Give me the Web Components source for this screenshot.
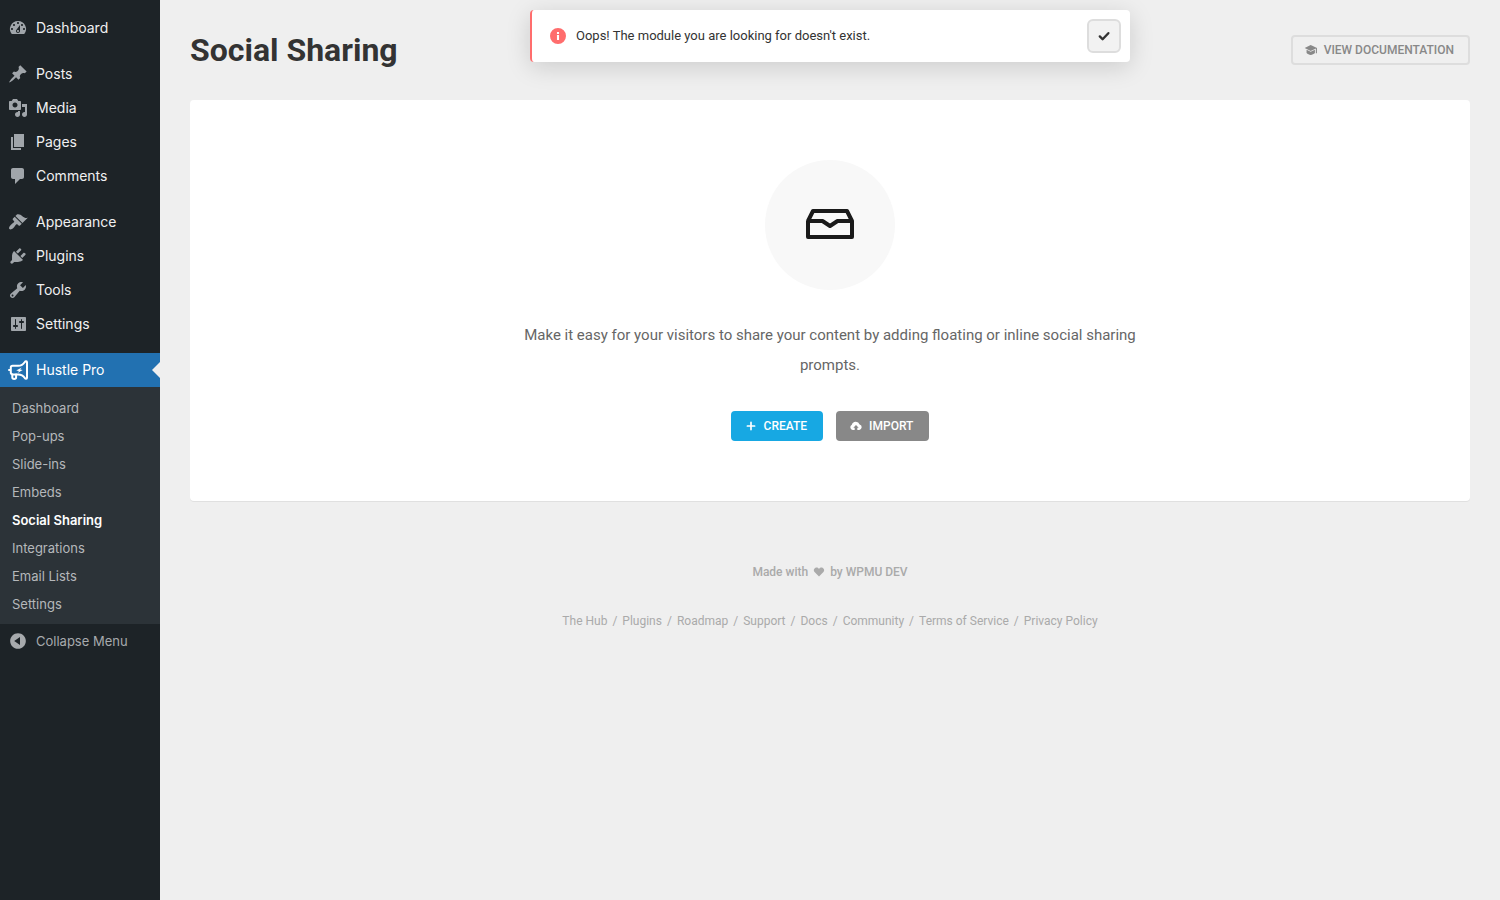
<!doctype html>
<html lang="en">
<head>
    <meta charset="UTF-8">
    <title>Social Sharing</title>
    <style>
        body {
            margin: 0;
            background: #efefef;
            font-family: Roboto, "Liberation Sans", sans-serif;
        }
    </style>
</head>
<body>
<admin-page></admin-page>

<script type="text/javascript">

    // all icons use currentColor, so they follow the text colour of their user
    const icons = {
        dashboard: '<path fill-rule="evenodd" d="M3.76 16h12.48A7.998 7.998 0 0 0 10 3a7.998 7.998 0 0 0-6.24 13zM10 4c.55 0 1 .45 1 1s-.45 1-1 1-1-.45-1-1 .45-1 1-1zM6 6c.55 0 1 .45 1 1s-.45 1-1 1-1-.45-1-1 .45-1 1-1zm8 0c.55 0 1 .45 1 1s-.45 1-1 1-1-.45-1-1 .45-1 1-1zm-5.37 5.55L12 7v6c0 1.1-.9 2-2 2s-2-.9-2-2c0-.57.24-1.08.63-1.45zM4 10c.55 0 1 .45 1 1s-.45 1-1 1-1-.45-1-1 .45-1 1-1zm12 0c.55 0 1 .45 1 1s-.45 1-1 1-1-.45-1-1 .45-1 1-1zm-5 3c0-.55-.45-1-1-1s-1 .45-1 1 .45 1 1 1 1-.45 1-1z"/>',
        post: '<path d="M10.44 3.02l1.82-1.82 6.36 6.35-1.83 1.82c-1.05-.68-2.48-.57-3.41.36l-.75.75c-.92.93-1.04 2.35-.35 3.41l-1.83 1.82-2.41-2.41-2.8 2.79c-.42.42-3.38 2.71-3.8 2.29s1.86-3.39 2.28-3.81l2.79-2.79L4.1 9.36l1.83-1.82c1.05.69 2.48.57 3.4-.36l.75-.75c.93-.92 1.05-2.35.36-3.41z"/>',
        media: '<path fill-rule="evenodd" d="M13 11V4c0-.55-.45-1-1-1h-1.67L9 1H5L3.67 3H2c-.55 0-1 .45-1 1v7c0 .55.45 1 1 1h10c.55 0 1-.45 1-1zM7 4.5c1.38 0 2.5 1.12 2.5 2.5S8.38 9.5 7 9.5 4.5 8.38 4.5 7 5.62 4.5 7 4.5zM14 6h5v10.5c0 1.38-1.12 2.5-2.5 2.5S14 17.88 14 16.5s1.12-2.5 2.5-2.5c.17 0 .34.02.5.05V9h-3V6zm-4 8.05V13h2v3.5c0 1.38-1.12 2.5-2.5 2.5S7 17.88 7 16.5 8.12 14 9.5 14c.17 0 .34.02.5.05z"/>',
        page: '<path d="M6 15V2h10v13H6zm-1 1h8v2H3V5h2v11z"/>',
        comment: '<path d="M5 2h9c1.1 0 2 .9 2 2v7c0 1.1-.9 2-2 2h-2l-5 5v-5H5c-1.1 0-2-.9-2-2V4c0-1.1.9-2 2-2z"/>',
        appearance: '<path d="M14.48 11.06L7.41 3.99l1.5-1.5c.5-.56 2.3-.47 3.51.32 1.21.8 1.43 1.28 2.91 2.1 1.18.64 2.45 1.26 4.45.85zm-.71.71L6.7 4.7 4.93 6.47c-.39.39-.39 1.02 0 1.41l1.06 1.06c.39.39.39 1.03 0 1.42-.6.6-1.43 1.11-2.21 1.69-.35.26-.7.53-1.01.84C1.43 14.23.4 16.08 1.4 17.07c.99 1 2.84-.03 4.18-1.36.31-.31.58-.66.85-1.02.57-.78 1.08-1.61 1.69-2.21.39-.39 1.02-.39 1.41 0l1.06 1.06c.39.39 1.02.39 1.41 0z"/>',
        plugin: '<path d="M13.11 4.36L9.87 7.6 8 5.73l3.24-3.24c.35-.34 1.05-.2 1.56.32.52.51.66 1.21.31 1.55zm-8 1.77l.91-1.12 9.01 9.01-1.19.84c-.71.71-2.63 1.16-3.82 1.16H6.14L4.9 17.26c-.59.59-1.54.59-2.12 0-.59-.58-.59-1.53 0-2.12l1.24-1.24v-3.88c0-1.13.4-3.19 1.09-3.89zm7.26 3.97l3.24-3.24c.34-.35 1.04-.21 1.55.31.52.51.66 1.21.31 1.55l-3.24 3.25z"/>',
        tool: '<path fill-rule="evenodd" d="M16.68 9.77c-1.34 1.34-3.3 1.67-4.95.99l-5.41 6.52c-.99.99-2.59.99-3.58 0s-.99-2.59 0-3.57l6.52-5.42c-.68-1.65-.35-3.61.99-4.95 1.28-1.28 3.12-1.62 4.72-1.06l-2.89 2.89 2.82 2.82 2.86-2.87c.53 1.58.18 3.39-1.08 4.65zM3.81 16.21c.4.39 1.04.39 1.43 0 .4-.4.4-1.04 0-1.43-.39-.4-1.03-.4-1.43 0-.39.39-.39 1.03 0 1.43z"/>',
        settings: '<path fill-rule="evenodd" d="M18 16V4c0-.55-.45-1-1-1H4c-.55 0-1 .45-1 1v12c0 .55.45 1 1 1h13c.55 0 1-.45 1-1zM8 11h1c.55 0 1 .45 1 1s-.45 1-1 1H8v1.5c0 .28-.22.5-.5.5s-.5-.22-.5-.5V13H6c-.55 0-1-.45-1-1s.45-1 1-1h1V5.5c0-.28.22-.5.5-.5s.5.22.5.5V11zm5-2h-1c-.55 0-1-.45-1-1s.45-1 1-1h1V5.5c0-.28.22-.5.5-.5s.5.22.5.5V7h1c.55 0 1 .45 1 1s-.45 1-1 1h-1v5.5c0 .28-.22.5-.5.5s-.5-.22-.5-.5V9z"/>',
        hustle: '<g fill="none" stroke="currentColor" stroke-width="2" stroke-linejoin="round" stroke-linecap="round"><path d="M1 10h1.800V7.600q0-1.800 1.800-1.800h5.600c3.400 0 5.200-1.600 6.600-3.800.7-1.200 2.200-1.200 2.200.3v15.400c0 1.500-1.500 1.500-2.200.3-1.400-2.200-3.200-3.600-6.600-3.600H4.600q-1.800 0-1.800-1.800V10"/><path d="M4.300 14.600v3c0 1.800 3.800 1.800 3.800 0v-3"/></g><path d="M13.800 7.400l-5.600 3.200 2.800.3-1.500 2.100 5.200-3-2.600-.4z"/>',
        collapse: '<path fill-rule="evenodd" d="M10 2.160c4.330 0 7.840 3.510 7.840 7.840s-3.510 7.840-7.840 7.840S2.160 14.330 2.160 10 5.710 2.160 10 2.160zm2 11.720V6.120L6.180 9.970z"/>',
        info: '<path fill-rule="evenodd" d="M10 0a10 10 0 1 1 0 20 10 10 0 0 1 0-20zM8.700 5v2.400h2.600V5zM8.700 8.800V15h2.600V8.800z"/>',
        check: '<path d="M4 10.600l4 4L16.200 6" fill="none" stroke="currentColor" stroke-width="3.400" stroke-linecap="round" stroke-linejoin="round"/>',
        academy: '<path d="M9.500 1.800L20 6.600l-10.500 5L-.5 6.600z"/><path d="M2.600 9.600l6.900 3.500 7-3.500v5.600c-3.500 3.900-10.400 3.900-13.900 0z"/><path d="M19 6.800v8.600" stroke="currentColor" stroke-width="1.800" fill="none"/>',
        plus: '<path d="M10 4v12M4 10h12" fill="none" stroke="currentColor" stroke-width="2.800" stroke-linecap="round"/>',
        cloud: '<path fill-rule="evenodd" d="M4.600 16.500a4.400 4.400 0 0 1-1.500-8.400A6.700 6.700 0 0 1 16 7.300a4.700 4.700 0 0 1-.6 9.200h-3.200v-3.700h2.300L10 8.300l-4.500 4.500h2.300v3.700z"/>',
        heart: '<path d="M10 17.500l-7.400-7.300C-1.500 5.300 5.800-.7 10 4.800c4.200-5.500 11.500.5 7.400 5.400z"/>'
    }

    class uiIcon extends HTMLElement {
        constructor () {
            super()
            this.attachShadow({mode: 'open'})
        }
        connectedCallback () {
            this.shadowRoot.innerHTML = `
            <style>
            :host{
                display: block;
                flex: none;
                width: var(--icon-size, 20px);
                height: var(--icon-size, 20px);
            }
            svg{
                display: block;
                width: 100%;
                height: 100%;
                overflow: visible;
                fill: currentColor;
            }
            </style>
            <svg viewBox="0 0 20 20" aria-hidden="true">${icons[this.getAttribute('name')]}</svg>`
        }
    }
    customElements.define('ui-icon', uiIcon)

    // one row of the side menu
    class menuItem extends HTMLElement {
        constructor () {
            super()
            this.attachShadow({mode: 'open'})
        }
        connectedCallback () {
            this.shadowRoot.innerHTML = `
            <style>
            :host{
                display: block;
            }
            a{
                display: flex;
                align-items: center;
                gap: 8px;
                height: 34px;
                padding-left: 8px;
                color: #f0f0f1;
                font-size: 14px;
                line-height: 18px;
                text-decoration: none;
            }
            ui-icon{
                color: #a0a5aa;
            }
            :host([current]) a{
                background: #2271b1;
                color: #fff;
            }
            :host([current]) ui-icon{
                color: #fff;
            }
            /* arrow that points at the open page */
            :host([current]) a::after{
                content: "";
                margin-left: auto;
                border: 8px solid transparent;
                border-left: 0;
                border-right-color: #efefef;
            }
            </style>
            <a href="#"><ui-icon name="${this.getAttribute('icon')}"></ui-icon><slot></slot></a>`
        }
    }
    customElements.define('menu-item', menuItem)

    class sideMenu extends HTMLElement {
        constructor () {
            super()
            const shadowRoot = this.attachShadow({mode: 'open'})
            shadowRoot.innerHTML = `
            <style>
            :host{
                display: block;
                box-sizing: border-box;
                padding-top: 11px;
                background: #1d2327;
                font-family: Inter, "Liberation Sans", sans-serif;
            }
            .group{
                margin-bottom: 12px;
            }
            .submenu{
                margin: 0;
                padding: 7px 12px 6px;
                list-style: none;
                background: #2c3338;
            }
            .submenu a{
                display: block;
                color: #b5b8bb;
                font-size: 13px;
                line-height: 28px;
                text-decoration: none;
            }
            .submenu a[aria-current]{
                color: #fff;
                font-weight: 600;
            }
            button{
                display: flex;
                align-items: center;
                gap: 8px;
                width: 100%;
                height: 34px;
                padding: 0 0 0 8px;
                border: 0;
                background: none;
                color: #a7aaad;
                font: 13px/18px Inter, "Liberation Sans", sans-serif;
            }
            </style>
            <nav aria-label="Main menu">
                <div class="group">
                    <menu-item icon="dashboard">Dashboard</menu-item>
                </div>
                <div class="group">
                    <menu-item icon="post">Posts</menu-item>
                    <menu-item icon="media">Media</menu-item>
                    <menu-item icon="page">Pages</menu-item>
                    <menu-item icon="comment">Comments</menu-item>
                </div>
                <div class="group">
                    <menu-item icon="appearance">Appearance</menu-item>
                    <menu-item icon="plugin">Plugins</menu-item>
                    <menu-item icon="tool">Tools</menu-item>
                    <menu-item icon="settings">Settings</menu-item>
                </div>
                <menu-item icon="hustle" current>Hustle Pro</menu-item>
                <ul class="submenu">
                    <li><a href="#">Dashboard</a></li>
                    <li><a href="#">Pop-ups</a></li>
                    <li><a href="#">Slide-ins</a></li>
                    <li><a href="#">Embeds</a></li>
                    <li><a href="#" aria-current="page">Social Sharing</a></li>
                    <li><a href="#">Integrations</a></li>
                    <li><a href="#">Email Lists</a></li>
                    <li><a href="#">Settings</a></li>
                </ul>
                <button type="button"><ui-icon name="collapse"></ui-icon>Collapse Menu</button>
            </nav>`
        }
    }
    customElements.define('side-menu', sideMenu)

    // kind: blue, gray or ghost
    class uiButton extends HTMLElement {
        constructor () {
            super()
            this.attachShadow({mode: 'open'})
        }
        connectedCallback () {
            const tag = this.hasAttribute('href') ? 'a href="#"' : 'button type="button"'
            this.shadowRoot.innerHTML = `
            <style>
            :host{
                display: block;
                --icon-size: 12px;
            }
            a, button{
                display: flex;
                align-items: center;
                gap: 7px;
                box-sizing: border-box;
                height: 30px;
                margin: 0;
                padding: 0 14px 0 12px;
                border: 2px solid transparent;
                border-radius: 4px;
                color: #fff;
                font: 500 12px/16px Roboto, "Liberation Sans", sans-serif;
                text-decoration: none;
                text-transform: uppercase;
            }
            :host([kind=blue]) button{
                border-color: #17a8e3;
                background: #17a8e3;
            }
            :host([kind=gray]) button{
                border-color: #888;
                background: #888;
            }
            :host([kind=ghost]) a{
                border-color: #ddd;
                color: #888;
            }
            </style>
            <${tag}><ui-icon name="${this.getAttribute('icon')}"></ui-icon><slot></slot></${tag.split(' ')[0]}>`
        }
    }
    customElements.define('ui-button', uiButton)

    class noticeBar extends HTMLElement {
        constructor () {
            super()
            const shadowRoot = this.attachShadow({mode: 'open'})
            shadowRoot.innerHTML = `
            <style>
            :host{
                display: flex;
                align-items: center;
                gap: 10px;
                box-sizing: border-box;
                padding: 9px 9px 9px 18px;
                border-left: 2px solid #ff6d6d;
                border-radius: 4px;
                background: #fff;
                box-shadow: 0 5px 25px rgba(0, 0, 0, .15);
                color: #333;
                font-size: 13px;
                line-height: 22px;
                --icon-size: 16px;
            }
            .info{
                color: #ff6d6d;
            }
            button{
                display: flex;
                align-items: center;
                justify-content: center;
                box-sizing: border-box;
                width: 34px;
                height: 34px;
                margin-left: auto;
                padding: 0;
                border: 2px solid #ddd;
                border-radius: 6px;
                background: #f2f2f2;
                color: #333;
                --icon-size: 14px;
            }
            </style>
            <ui-icon class="info" name="info"></ui-icon>
            <slot></slot>
            <button type="button" aria-label="Dismiss"><ui-icon name="check"></ui-icon></button>`
        }
    }
    customElements.define('notice-bar', noticeBar)

    class emptyBox extends HTMLElement {
        constructor () {
            super()
            const shadowRoot = this.attachShadow({mode: 'open'})
            shadowRoot.innerHTML = `
            <style>
            :host{
                display: flex;
                flex-direction: column;
                align-items: center;
                padding: 60px 30px;
                border-radius: 4px;
                background: #fff;
                box-shadow: 0 1px 0 #e0e0e0;
            }
            .picture{
                display: flex;
                align-items: center;
                justify-content: center;
                width: 130px;
                height: 130px;
                border-radius: 50%;
                background: #f8f8f8;
            }
            p{
                max-width: 640px;
                margin: 30px 0 31px;
                color: #666;
                font-size: 15px;
                line-height: 30px;
                text-align: center;
            }
            .actions{
                display: flex;
                gap: 13px;
            }
            </style>
            <div class="picture">
                <svg width="48" height="32" viewBox="0 0 48 32" fill="none" stroke="#1a1a1a" stroke-width="4" stroke-linejoin="round" aria-hidden="true">
                    <path d="M2 12L7 2h34L46 12v16H2V12h14.500l7.500 5 7.500-5H46"/>
                </svg>
            </div>
            <p><slot></slot></p>
            <div class="actions"><slot name="actions"></slot></div>`
        }
    }
    customElements.define('empty-box', emptyBox)

    class pageFooter extends HTMLElement {
        constructor () {
            super()
            const shadowRoot = this.attachShadow({mode: 'open'})
            shadowRoot.innerHTML = `
            <style>
            :host{
                display: flex;
                flex-direction: column;
                align-items: center;
                gap: 27px;
                color: #aaa;
                font-size: 12px;
                line-height: 22px;
                --icon-size: 12px;
            }
            .made{
                display: flex;
                align-items: center;
                gap: 5px;
                font-weight: 500;
            }
            ul{
                display: flex;
                flex-wrap: wrap;
                margin: 0;
                padding: 0;
                list-style: none;
            }
            li + li::before{
                content: "/";
                margin: 0 5px;
            }
            a{
                color: inherit;
                text-decoration: none;
            }
            </style>
            <div class="made"><span>Made with</span><ui-icon name="heart"></ui-icon><span>by WPMU DEV</span></div>
            <ul>
                <li><a href="#">The Hub</a></li>
                <li><a href="#">Plugins</a></li>
                <li><a href="#">Roadmap</a></li>
                <li><a href="#">Support</a></li>
                <li><a href="#">Docs</a></li>
                <li><a href="#">Community</a></li>
                <li><a href="#">Terms of Service</a></li>
                <li><a href="#">Privacy Policy</a></li>
            </ul>`
        }
    }
    customElements.define('page-footer', pageFooter)

    class adminPage extends HTMLElement {
        constructor () {
            super()
            const shadowRoot = this.attachShadow({mode: 'open'})
            shadowRoot.innerHTML = `
            <style>
            :host{
                display: grid;
                grid-template-columns: 160px 1fr;
                min-height: 100vh;
            }
            main{
                position: relative;
                padding: 30px;
            }
            header{
                display: flex;
                align-items: center;
                justify-content: space-between;
                margin-bottom: 30px;
            }
            h1{
                margin: 0;
                color: #333;
                font-size: 32px;
                font-weight: 700;
                line-height: 40px;
            }
            /* floats over the header */
            notice-bar{
                position: absolute;
                top: 10px;
                left: 0;
                right: 0;
                width: 600px;
                margin: 0 auto;
            }
            page-footer{
                margin-top: 60px;
            }
            </style>
            <side-menu></side-menu>
            <main>
                <header>
                    <h1>Social Sharing</h1>
                    <ui-button kind="ghost" icon="academy" href>View Documentation</ui-button>
                </header>
                <notice-bar role="alert">Oops! The module you are looking for doesn't exist.</notice-bar>
                <empty-box>
                    Make it easy for your visitors to share your content by adding floating or inline social sharing prompts.
                    <ui-button slot="actions" kind="blue" icon="plus">Create</ui-button>
                    <ui-button slot="actions" kind="gray" icon="cloud">Import</ui-button>
                </empty-box>
                <page-footer></page-footer>
            </main>`
        }
    }
    customElements.define('admin-page', adminPage)

</script>
</body>
</html>
